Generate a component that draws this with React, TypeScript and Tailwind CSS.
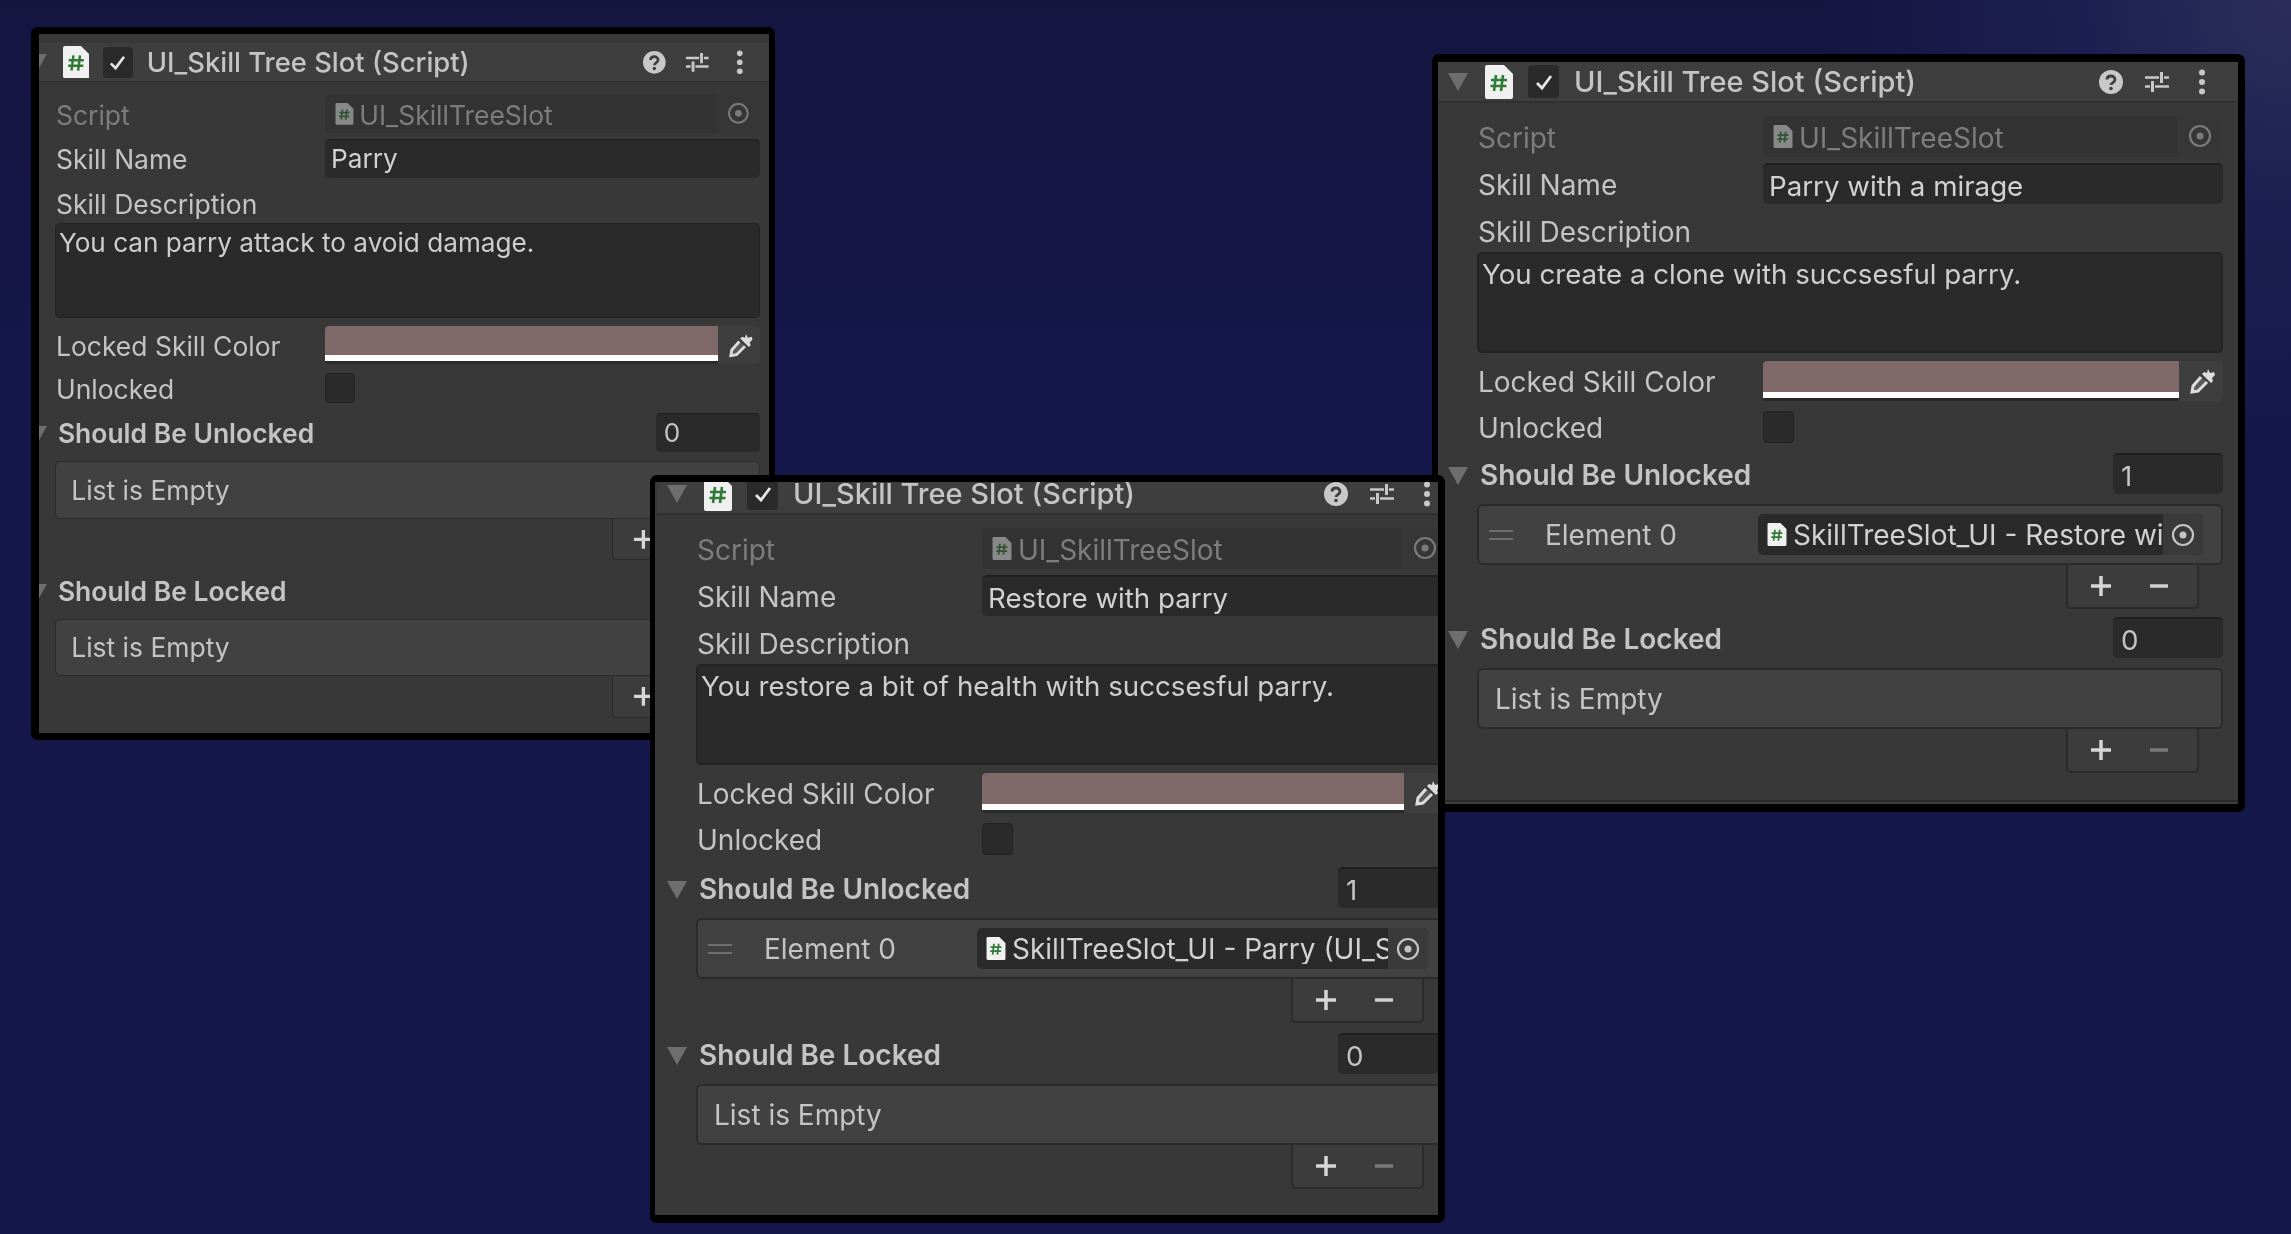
import React from "react";

function ScriptIcon({ small, muted }: { small?: boolean; muted?: boolean }) {
  return (
    <svg viewBox="0 0 28 34" className={small ? "h-[23px] w-[20px] shrink-0" : "h-[34px] w-[28px] shrink-0"} style={{ opacity: muted ? 0.45 : 1 }}>
      <path d="M2 0h17l9 9v23a2 2 0 0 1-2 2H2a2 2 0 0 1-2-2V2a2 2 0 0 1 2-2z" fill="#f0f0f0" />
      <path d="M11 10 9 26M18 10l-2 16M6 15h16M5.500 21h16" stroke="#2f7a35" strokeWidth="2.600" fill="none" />
    </svg>
  );
}

function Triangle() {
  return (
    <svg viewBox="0 0 20 18" className="h-[18px] w-[20px] shrink-0">
      <path d="M0 0h20L10 18z" fill="#6e6e6e" />
    </svg>
  );
}

function Target({ dim }: { dim?: boolean }) {
  return (
    <svg viewBox="0 0 24 24" className="h-[24px] w-[24px]">
      <circle cx="12" cy="12" r="10" fill="none" stroke={dim ? "#7a7a7a" : "#c4c4c4"} strokeWidth="2.200" />
      <circle cx="12" cy="12" r="3.500" fill={dim ? "#7a7a7a" : "#c4c4c4"} />
    </svg>
  );
}

function Help() {
  return (
    <svg viewBox="0 0 24 24" className="h-[24px] w-[24px] shrink-0">
      <circle cx="12" cy="12" r="12" fill="#c8c8c8" />
      <path d="M8 9.500C8 7 10 6 12 6s4 1.300 4 3.500c0 3-4 3-4 5.500" fill="none" stroke="#3e3e3e" strokeWidth="2.800" />
      <circle cx="12" cy="18.500" r="1.800" fill="#3e3e3e" />
    </svg>
  );
}

function Sliders() {
  return (
    <svg viewBox="0 0 26 24" className="h-[24px] w-[26px] shrink-0">
      <path d="M1 7.500h14M20 7.500h5M1 16.500h5M11 16.500h14" stroke="#c8c8c8" strokeWidth="2.600" fill="none" />
      <path d="M17.500 2v11M8.500 11v11" stroke="#c8c8c8" strokeWidth="3" fill="none" />
    </svg>
  );
}

function Dots() {
  return (
    <svg viewBox="0 0 8 26" className="h-[26px] w-[8px] shrink-0">
      <circle cx="4" cy="3.500" r="3" fill="#c8c8c8" />
      <circle cx="4" cy="13" r="3" fill="#c8c8c8" />
      <circle cx="4" cy="22.500" r="3" fill="#c8c8c8" />
    </svg>
  );
}

function Check() {
  return (
    <svg viewBox="0 0 20 20" className="h-[20px] w-[20px]">
      <path d="M3 11l5 5L17 4" fill="none" stroke="#e6e6e6" strokeWidth="2.800" />
    </svg>
  );
}

function Dropper() {
  return (
    <svg viewBox="0 0 28 28" className="h-[28px] w-[28px]">
      <path d="M19 2l2 4 4-1 1 3-3 3 1 3-2 2-9-9 2-2 3 1z" fill="#dcdcdc" />
      <path d="M12 10 4 19l-1 6 6-1 9-9" fill="#5a5a5a" stroke="#dcdcdc" strokeWidth="3" />
    </svg>
  );
}

function Label({ children, dim }: { children: React.ReactNode; dim?: boolean }) {
  return <div className={dim ? "w-[286px] shrink-0 pl-px pt-[2px] text-[#7d7d7d]" : "w-[286px] shrink-0 pl-px pt-[2px]"}>{children}</div>;
}

function Footer({ canRemove }: { canRemove: boolean }) {
  return (
    <div className="flex justify-end pr-[39px]">
      <div className="flex h-[44px] w-[133px] items-center rounded-b-[5px] border-x-2 border-b-2 border-[#2b2b2b] bg-[#3c3c3c] pl-[22px]">
        <svg viewBox="0 0 22 22" className="h-[22px] w-[22px] shrink-0">
          <path d="M11 1v20M1 11h20" stroke="#d6d6d6" strokeWidth="3.500" />
        </svg>
        <svg viewBox="0 0 20 22" className="ml-[37px] h-[22px] w-[20px] shrink-0">
          <path d="M1 11h18" stroke={canRemove ? "#d0d0d0" : "#7a7a7a"} strokeWidth="3.500" />
        </svg>
      </div>
    </div>
  );
}

function ListGroup({ title, count, element, gap }: { title: string; count: string; element?: string; gap: string }) {
  return (
    <div className={gap}>
      <div className="relative flex h-[41px] items-center pr-[15px]">
        <div className="absolute left-[10px] top-[14px]">
          <Triangle />
        </div>
        <div className="ml-[42px] pt-[3px] font-semibold">{title}</div>
        <div className="ml-auto flex h-full w-[110px] items-center rounded-[5px] border-t-2 border-[#1f1f1f] bg-[#2a2a2a] pl-[8px] pt-[2px] text-[27.700px]">{count}</div>
      </div>
      <div className="ml-[39px] mr-[15px] mt-[10px] flex h-[61px] items-center rounded-[6px] border-2 border-[#2b2b2b] bg-[#414141] pr-[18px]">
        {element ? (
          <>
            <div className="ml-[10px] w-[24px] shrink-0 border-y-2 border-[#6e6e6e] py-[3px]" />
            <div className="ml-[32px] w-[213px] shrink-0 pt-px">Element 0</div>
            <div className="flex h-[41px] min-w-0 flex-1 items-center overflow-hidden rounded-[5px] bg-[#2a2a2a] pl-[9px]">
              <ScriptIcon small />
              <div className="ml-[6px] min-w-0 flex-1 overflow-hidden whitespace-nowrap pt-px text-[#d2d2d2]">{element}</div>
              <div className="flex h-full w-[40px] shrink-0 items-center justify-center bg-[#3a3a3a]">
                <Target />
              </div>
            </div>
          </>
        ) : (
          <div className="ml-[16px]">List is Empty</div>
        )}
      </div>
      <Footer canRemove={!!element} />
    </div>
  );
}

function Content({
  name,
  description,
  unlocked,
  unlockedElement,
  firstGap,
  secondGap,
}: {
  name: string;
  description: string;
  unlocked: string;
  unlockedElement?: string;
  firstGap: string;
  secondGap: string;
}) {
  return (
    <div className="text-[28px] leading-[30px] text-[#c4c4c4]">
      <div className="flex h-[41px] items-center border-b-2 border-[#303030] bg-[#3e3e3e] pl-[10px] pr-[32px]">
        <Triangle />
        <div className="ml-[17px]">
          <ScriptIcon />
        </div>
        <div className="ml-[15px] flex h-[33px] w-[31px] shrink-0 items-center justify-center rounded-[4px] bg-[#2a2a2a]">
          <Check />
        </div>
        <div className="ml-[15px] whitespace-nowrap text-[29px] font-medium">UI_Skill Tree Slot (Script)</div>
        <div className="ml-auto flex items-center">
          <Help />
          <div className="ml-[21px]">
            <Sliders />
          </div>
          <div className="ml-[28px]">
            <Dots />
          </div>
        </div>
      </div>
      <div className="pl-[39px] pt-[13px]">
        <div className="flex h-[41px] items-center pr-[15px]">
          <Label dim>Script</Label>
          <div className="flex h-full min-w-0 flex-1 items-center overflow-hidden rounded-[5px] bg-[#333333] pl-[10px] text-[#7d7d7d]">
            <ScriptIcon small muted />
            <div className="ml-[6px] flex-1 whitespace-nowrap pt-[2px]">UI_SkillTreeSlot</div>
            <div className="flex h-full w-[46px] shrink-0 items-center justify-center bg-[#363636] pb-[2px]">
              <Target dim />
            </div>
          </div>
        </div>
        <div className="mt-[6px] flex h-[41px] items-center pr-[15px]">
          <Label>Skill Name</Label>
          <div className="flex h-full flex-1 items-center rounded-[5px] border-t-2 border-[#1f1f1f] bg-[#2a2a2a] pl-[6px] pt-[2px] text-[27.700px] text-[#d2d2d2]">{name}</div>
        </div>
        <div className="mt-[13px] h-[30px] pl-px">Skill Description</div>
        <div className="mr-[15px] mt-[5px] h-[101px] rounded-[5px] border-2 border-[#232323] bg-[#2a2a2a] pl-[3px] pt-[5px] text-[27.700px] text-[#cecece]">{description}</div>
        <div className="mt-[8px] flex h-[40px] items-center pr-[15px]">
          <Label>Locked Skill Color</Label>
          <div className="flex h-full flex-1 overflow-hidden rounded-[4px] bg-[#2a2a2a]">
            <div className="flex h-full flex-1 flex-col">
              <div className="h-[31px] bg-[#7f6969]" />
              <div className="h-[6px] bg-white" />
            </div>
            <div className="flex h-full w-[44px] shrink-0 items-center justify-center bg-[#3e3e3e] pl-[4px]">
              <Dropper />
            </div>
          </div>
        </div>
        <div className="mt-[10px] flex h-[32px] items-center">
          <Label>Unlocked</Label>
          <div className="h-[32px] w-[31px] rounded-[4px] border border-[#232323] bg-[#2a2a2a]" />
        </div>
      </div>
      <ListGroup gap={firstGap} title="Should Be Unlocked" count={unlocked} element={unlockedElement} />
      <ListGroup gap={secondGap} title="Should Be Locked" count="0" />
    </div>
  );
}

export default function App() {
  return (
    <div className="relative h-[1234px] w-[2291px] overflow-hidden bg-[radial-gradient(circle_at_100%_0%,#2c2e58_0%,#1d1f52_8%,transparent_18%),linear-gradient(180deg,#14153f_0%,#15164a_30%)] font-['Inter',sans-serif]">
      <div className="absolute left-[31px] top-[27px] h-[713px] w-[744px] overflow-hidden rounded-[7px] border-b-[7px] border-l-[8px] border-r-[6px] border-t-[7px] border-black bg-[#383838] blur-[0.5px]">
        <div className="-ml-[22px] mt-[10px] w-[800px] [zoom:0.945]">
          <Content firstGap="mt-[10px]" secondGap="mt-[11px]" name="Parry" description="You can parry attack to avoid damage." unlocked="0" />
        </div>
      </div>
      <div className="absolute left-[1432px] top-[54px] h-[758px] w-[813px] overflow-hidden rounded-[7px] border-b-[8px] border-l-[6px] border-r-[7px] border-t-[8px] border-black bg-[#383838] blur-[0.5px]">
        <div className="w-[800px]">
          <Content firstGap="mt-[10px]" secondGap="mt-[8px]" name="Parry with a mirage" description="You create a clone with succsesful parry." unlocked="1" unlockedElement="SkillTreeSlot_UI - Restore with parry (UI_Skill Tree Slot)" />
          <div className="mt-[27px] h-[6px] border-t-2 border-[#2a2a2a] bg-[#3e3e3e]" />
        </div>
      </div>
      <div className="absolute left-[650px] top-[475px] h-[748px] w-[795px] overflow-hidden rounded-[7px] border-b-[8px] border-l-[5px] border-r-[7px] border-t-[7px] border-black bg-[#383838] blur-[0.5px]">
        <div className="-mt-[8px] ml-[2px] w-[806px]">
          <Content firstGap="mt-[12px]" secondGap="mt-[10px]" name="Restore with parry" description="You restore a bit of health with succsesful parry." unlocked="1" unlockedElement="SkillTreeSlot_UI - Parry (UI_Skill Tree Slot)" />
        </div>
      </div>
    </div>
  );
}
